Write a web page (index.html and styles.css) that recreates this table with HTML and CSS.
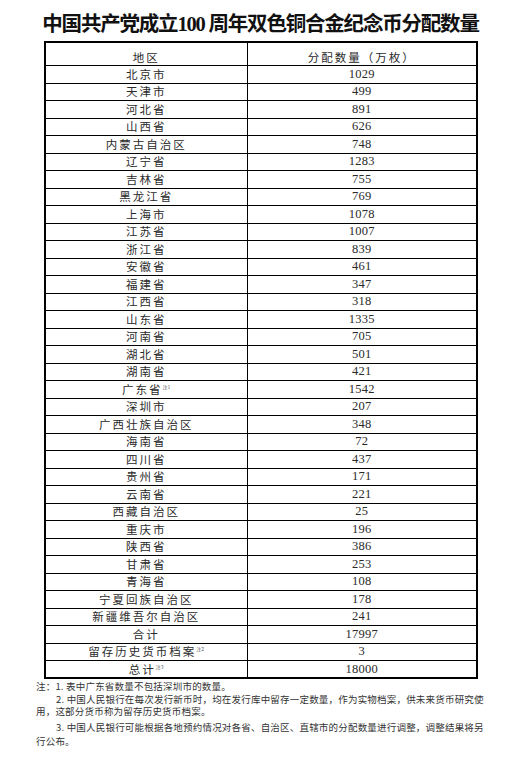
FILE: index.html
```html
<!DOCTYPE html>
<html lang="zh-CN">
<head>
<meta charset="utf-8">
<title>中国共产党成立100周年双色铜合金纪念币分配数量</title>
<link rel="stylesheet" href="styles.css">
</head>
<body>
<main class="sheet">
  <h1 class="title">中国共产党成立100 周年双色铜合金纪念币分配数量</h1>
  <table class="alloc">
    <colgroup><col class="col-region"><col class="col-qty"></colgroup>
    <thead>
      <tr><th>地区</th><th>分配数量（万枚）</th></tr>
    </thead>
    <tbody>
      <tr><td class="region">北京市</td><td class="qty">1029</td></tr>
      <tr><td class="region">天津市</td><td class="qty">499</td></tr>
      <tr><td class="region">河北省</td><td class="qty">891</td></tr>
      <tr><td class="region">山西省</td><td class="qty">626</td></tr>
      <tr><td class="region">内蒙古自治区</td><td class="qty">748</td></tr>
      <tr><td class="region">辽宁省</td><td class="qty">1283</td></tr>
      <tr><td class="region">吉林省</td><td class="qty">755</td></tr>
      <tr><td class="region">黑龙江省</td><td class="qty">769</td></tr>
      <tr><td class="region">上海市</td><td class="qty">1078</td></tr>
      <tr><td class="region">江苏省</td><td class="qty">1007</td></tr>
      <tr><td class="region">浙江省</td><td class="qty">839</td></tr>
      <tr><td class="region">安徽省</td><td class="qty">461</td></tr>
      <tr><td class="region">福建省</td><td class="qty">347</td></tr>
      <tr><td class="region">江西省</td><td class="qty">318</td></tr>
      <tr><td class="region">山东省</td><td class="qty">1335</td></tr>
      <tr><td class="region">河南省</td><td class="qty">705</td></tr>
      <tr><td class="region">湖北省</td><td class="qty">501</td></tr>
      <tr><td class="region">湖南省</td><td class="qty">421</td></tr>
      <tr><td class="region">广东省<sup class="ref">注1</sup></td><td class="qty">1542</td></tr>
      <tr><td class="region">深圳市</td><td class="qty">207</td></tr>
      <tr><td class="region">广西壮族自治区</td><td class="qty">348</td></tr>
      <tr><td class="region">海南省</td><td class="qty">72</td></tr>
      <tr><td class="region">四川省</td><td class="qty">437</td></tr>
      <tr><td class="region">贵州省</td><td class="qty">171</td></tr>
      <tr><td class="region">云南省</td><td class="qty">221</td></tr>
      <tr><td class="region">西藏自治区</td><td class="qty">25</td></tr>
      <tr><td class="region">重庆市</td><td class="qty">196</td></tr>
      <tr><td class="region">陕西省</td><td class="qty">386</td></tr>
      <tr><td class="region">甘肃省</td><td class="qty">253</td></tr>
      <tr><td class="region">青海省</td><td class="qty">108</td></tr>
      <tr><td class="region">宁夏回族自治区</td><td class="qty">178</td></tr>
      <tr><td class="region">新疆维吾尔自治区</td><td class="qty">241</td></tr>
      <tr><td class="region">合计</td><td class="qty">17997</td></tr>
      <tr><td class="region">留存历史货币档案<sup class="ref">注2</sup></td><td class="qty">3</td></tr>
      <tr><td class="region">总计<sup class="ref">注3</sup></td><td class="qty">18000</td></tr>
    </tbody>
  </table>
  <div class="notes">
    <p>注：1. 表中广东省数量不包括深圳市的数量。</p>
    <p class="indent">2. 中国人民银行在每次发行新币时，均在发行库中留存一定数量，作为实物档案，供未来货币研究使<br>用，这部分货币称为留存历史货币档案。</p>
    <p class="indent last">3. 中国人民银行可能根据各地预约情况对各省、自治区、直辖市的分配数量进行调整，调整结果将另<br>行公布。</p>
  </div>
</main>
</body>
</html>
```
FILE: styles.css
```css
html, body {
  margin: 0;
  padding: 0;
  background: #ffffff;
}

.sheet {
  width: 521px;
}

.title {
  margin: 0;
  padding-top: 12px;
  font-family: "Liberation Serif", "Noto Sans CJK SC", serif;
  font-weight: 700;
  font-size: 20.5px;
  line-height: 24px;
  letter-spacing: -1.2px;
  text-align: center;
  color: #111111;
}

.alloc {
  width: 434px;
  margin: 5px auto 0;
  border-collapse: collapse;
  table-layout: fixed;
  border: 2px solid #000000;
}

.col-region {
  width: 203px;
}

.alloc th,
.alloc td {
  border: 1px solid #000000;
  padding: 0;
  text-align: center;
  color: #2a2a2a;
}

.alloc th {
  height: 22px;
  vertical-align: bottom;
  font-family: "Noto Sans CJK SC", sans-serif;
  font-weight: 400;
  font-size: 11.5px;
  line-height: 15px;
  letter-spacing: 2px;
}

.alloc tbody tr {
  height: 17.5px;
}

.alloc td {
  line-height: 15px;
  vertical-align: middle;
}

.region {
  font-family: "Noto Sans CJK SC", sans-serif;
  font-size: 11.5px;
  letter-spacing: 2px;
}

.qty {
  font-family: "Liberation Serif", serif;
  font-size: 12.5px;
  letter-spacing: 0.3px;
}

.ref {
  font-size: 5px;
  line-height: 0;
  letter-spacing: 0;
  vertical-align: 5px;
  color: #555555;
}

.notes {
  margin: 1px 0 0 36px;
  font-family: "Noto Sans CJK SC", sans-serif;
  font-size: 9.5px;
  letter-spacing: 0.2px;
  color: #333333;
}

.notes p {
  margin: 0;
  line-height: 12.5px;
  white-space: nowrap;
}

.notes .indent {
  text-indent: 20px;
}

.notes .last {
  margin-top: 2.5px;
  line-height: 14px;
}
```
